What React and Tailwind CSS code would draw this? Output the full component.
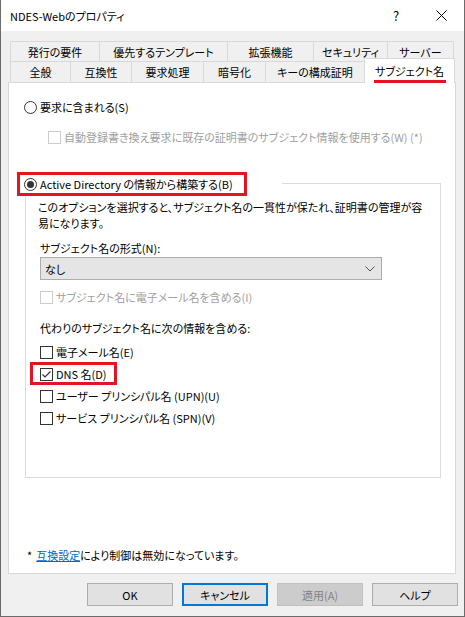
import React from 'react';

const font = "font-['Noto_Sans_CJK_JP',sans-serif] [font-feature-settings:'palt']";

const Check = ({ checked, disabled }) => (
  <span
    className={`w-[13px] h-[13px] border bg-white flex items-center justify-center shrink-0 ${
      disabled ? 'border-[#cccccc]' : 'border-[#333333]'
    }`}
  >
    {checked && (
      <svg width="11" height="11" viewBox="0 0 11 11">
        <path d="M1.5 5.5 L4 8 L9.5 2.5" fill="none" stroke="#333333" strokeWidth="1.2" />
      </svg>
    )}
  </span>
);

const Radio = ({ checked }) => (
  <span className="w-[13px] h-[13px] rounded-full border border-[#333333] bg-white flex items-center justify-center shrink-0">
    {checked && <span className="w-[7px] h-[7px] rounded-full bg-[#333333]" />}
  </span>
);

const Tab = ({ label, w, first }) => (
  <div
    className={`h-full flex items-center justify-center border-t border-l border-r border-[#d9d9d9] whitespace-nowrap ${
      first ? '' : '-ml-px'
    }`}
    style={{ width: w }}
  >
    {label}
  </div>
);

const Button = ({ children, variant }) => {
  const styles = {
    normal: 'bg-[#e1e1e1] border border-[#adadad] text-black',
    focus: 'bg-[#e1e1e1] border-2 border-[#0078d7] text-black',
    disabled: 'bg-[#cccccc] border border-[#bfbfbf] text-[#838383]',
  };
  return (
    <div className={`w-[86px] h-[23px] flex items-center justify-center ${styles[variant || 'normal']}`}>
      {children}
    </div>
  );
};

export default function App() {
  const row1 = [
    { label: '発行の要件', w: 90 },
    { label: '優先するテンプレート', w: 129 },
    { label: '拡張機能', w: 87 },
    { label: 'セキュリティ', w: 75 },
    { label: 'サーバー', w: 67 },
  ];
  const row2 = [
    { label: '全般', w: 61 },
    { label: '互換性', w: 62 },
    { label: '要求処理', w: 73 },
    { label: '暗号化', w: 63 },
    { label: 'キーの構成証明', w: 100 },
  ];

  return (
    <div className={`w-[465px] h-[617px] bg-[#f0f0f0] border-l border-r border-b border-[#6b6b6b] flex flex-col text-[11px] text-black leading-[16px] ${font}`}>
      {/* Title bar */}
      <div className="h-[31px] bg-white flex items-center pl-[9px] shrink-0">
        <span className="flex-1 text-[11px]">NDES-Webのプロパティ</span>
        <span className="w-[10px] text-[13px] mr-[33px]">?</span>
        <svg width="11" height="11" viewBox="0 0 11 11" className="mr-[17px]">
          <path d="M0.5 0.5 L10.5 10.5 M10.5 0.5 L0.5 10.5" stroke="#000" strokeWidth="1" />
        </svg>
      </div>

      {/* Body */}
      <div className="flex-1 pt-[10px]">
        <div className="flex h-[20px] ml-[9px]">
          {row1.map((t, i) => (
            <Tab key={t.label} label={t.label} w={t.w} first={i === 0} />
          ))}
        </div>
        <div className="flex items-end h-[21px] ml-[9px]">
          {row2.map((t, i) => (
            <Tab key={t.label} label={t.label} w={t.w} first={i === 0} />
          ))}
          <div className="relative z-10 -ml-px -mb-px h-[25px] w-[91px] bg-white border-t border-l border-r border-[#d9d9d9] flex flex-col items-center pt-[4px]">
            <span>サブジェクト名</span>
            <span className="w-[72px] h-[3px] bg-[#e5131f] mt-[1px]" />
          </div>
        </div>

        {/* Panel */}
        <div className="ml-[7px] w-[448px] h-[492px] bg-white border border-[#d9d9d9]">
          <div className="flex items-center h-[16px] mt-[16px] pl-[15px] gap-[3px]">
            <Radio />
            <span>要求に含まれる(S)</span>
          </div>
          <div className="flex items-center h-[16px] mt-[14px] pl-[39px] gap-[3px] text-[#a0a0a0] whitespace-nowrap">
            <Check disabled />
            <span>自動登録書き換え要求に既存の証明書のサブジェクト情報を使用する(W) (*)</span>
          </div>

          <div className="relative z-10 flex mt-[27px] ml-[8px] h-[24px]">
            <div className="w-[230px] h-[24px] border-[3px] border-[#e5131f] bg-white flex items-center pl-[4px] gap-[3px]">
              <Radio checked />
              <span className="whitespace-nowrap">Active Directory の情報から構築する(B)</span>
            </div>
            <div className="w-[35px] bg-white" />
          </div>

          {/* Group box */}
          <div className="ml-[16px] -mt-[13px] w-[416px] h-[295px] border border-[#dcdcdc] pl-[12px]">
            <p className="mt-[15px] whitespace-nowrap">
              このオプションを選択すると、サブジェクト名の一貫性が保たれ、証明書の管理が容
              <br />
              易になります。
            </p>
            <div className="ml-[2px]">
              <div className="mt-[9px] h-[16px]">サブジェクト名の形式(N):</div>
              <div className="mt-[1px] w-[342px] h-[23px] bg-[#e5e5e5] border border-[#adadad] flex items-center pl-[4px] pr-[6px]">
                <span className="flex-1">なし</span>
                <svg width="10" height="6" viewBox="0 0 10 6">
                  <path d="M0.5 0.5 L5 5 L9.5 0.5" fill="none" stroke="#555" strokeWidth="1" />
                </svg>
              </div>
              <div className="flex items-center h-[16px] mt-[9px] gap-[3px] text-[#a0a0a0]">
                <Check disabled />
                <span>サブジェクト名に電子メール名を含める(I)</span>
              </div>
              <div className="mt-[15px] h-[16px]">代わりのサブジェクト名に次の情報を含める:</div>
              <div className="mt-[5px]">
                <div className="flex items-center h-[22px] gap-[3px]">
                  <Check />
                  <span>電子メール名(E)</span>
                </div>
                <div className="relative flex items-center h-[22px] gap-[3px]">
                  <span className="absolute -left-[10px] -top-px w-[87px] h-[23px] border-[3px] border-[#e5131f]" />
                  <Check checked />
                  <span>DNS 名(D)</span>
                </div>
                <div className="flex items-center h-[22px] gap-[3px]">
                  <Check />
                  <span>ユーザー プリンシパル名 (UPN)(U)</span>
                </div>
                <div className="flex items-center h-[22px] gap-[3px]">
                  <Check />
                  <span>サービス プリンシパル名 (SPN)(V)</span>
                </div>
              </div>
            </div>
          </div>

          <div className="mt-[69px] ml-[18px] h-[16px] flex items-center">
            <span>*</span>
            <span className="ml-[4px] text-[#0066cc] underline">互換設定</span>
            <span>により制御は無効になっています。</span>
          </div>
        </div>

        {/* Buttons */}
        <div className="flex gap-[9px] mt-[9px] ml-[86px]">
          <Button>OK</Button>
          <Button variant="focus">キャンセル</Button>
          <Button variant="disabled">適用(A)</Button>
          <Button>ヘルプ</Button>
        </div>
      </div>
    </div>
  );
}
